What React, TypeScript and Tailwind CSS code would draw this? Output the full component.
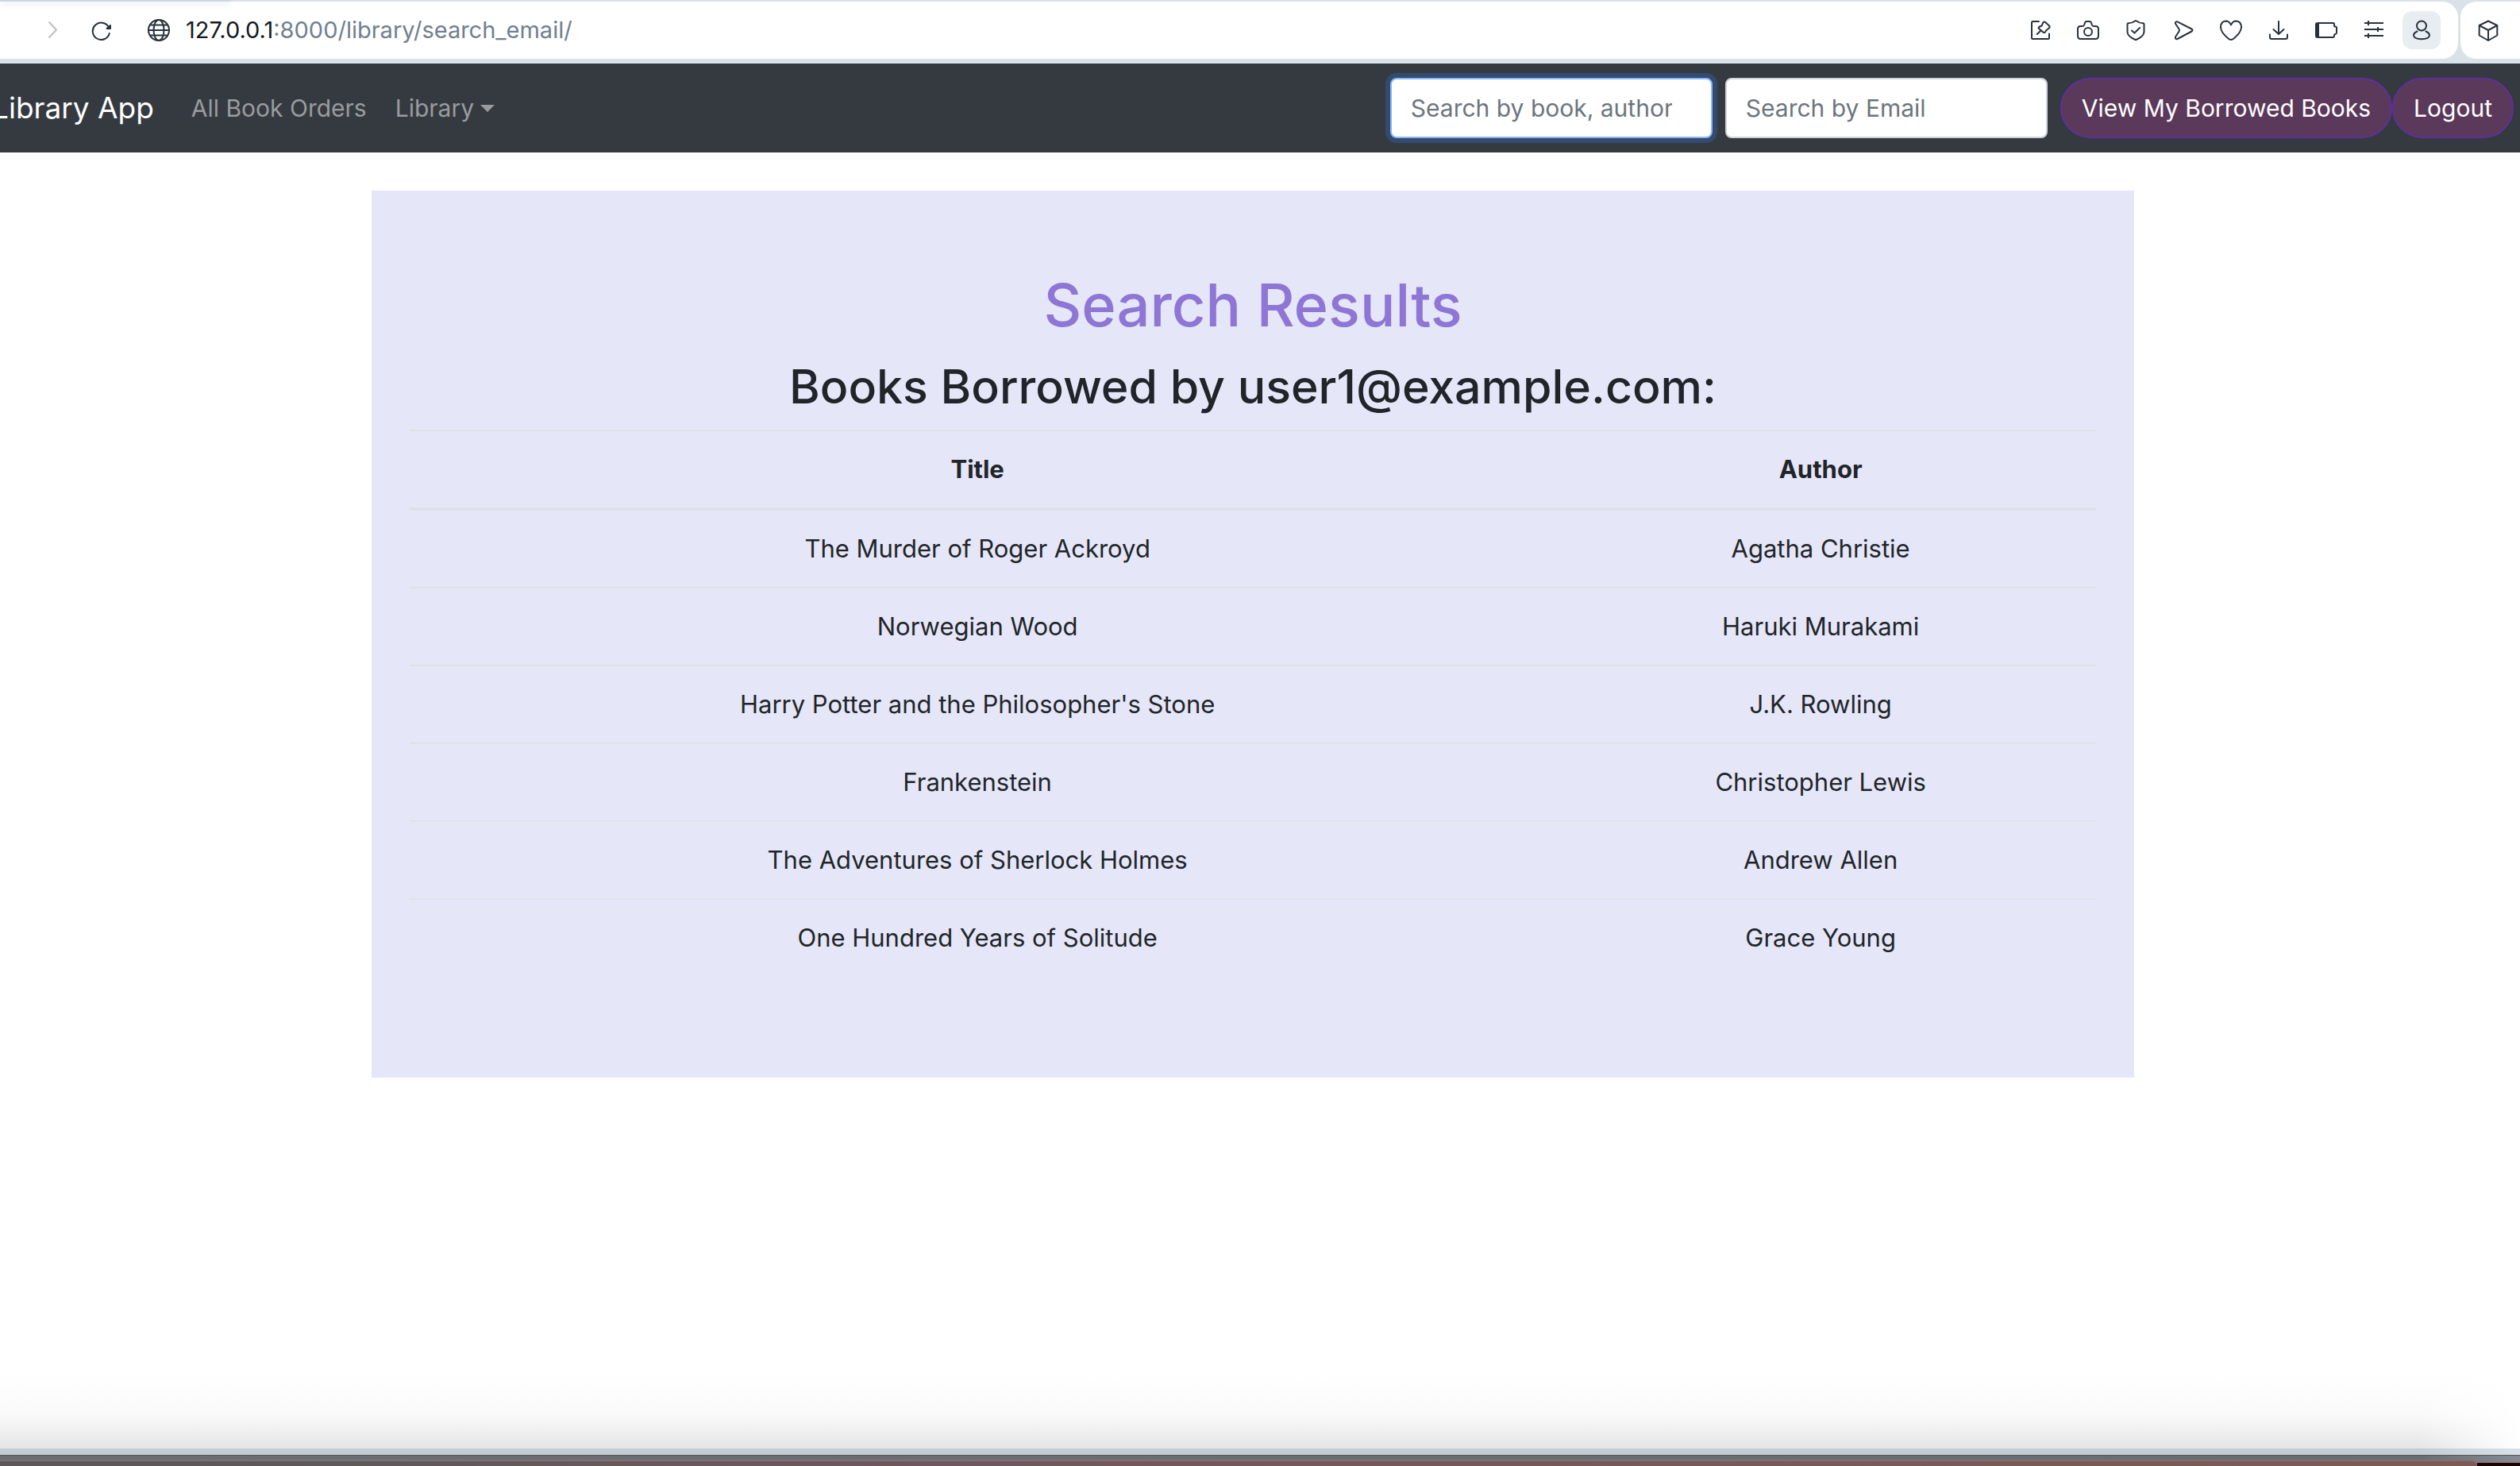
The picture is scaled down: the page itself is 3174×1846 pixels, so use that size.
import type { ReactNode } from "react";

function Icon({ children }: { children: ReactNode }) {
  return (
    <svg
      viewBox="0 0 28 28"
      className="h-7 w-7"
      fill="none"
      stroke="currentColor"
      strokeWidth="2"
      strokeLinecap="round"
      strokeLinejoin="round"
      aria-hidden="true"
    >
      {children}
    </svg>
  );
}

const tools: { label: string; icon: ReactNode }[] = [
  {
    label: "Pin page",
    icon: (
      <>
        <path d="M12 3H4.500Q3 3 3 4.500v19Q3 25 4.500 25H24q1 0 1-1v-5.500" />
        <path d="M17.500 4.300Q19 2.800 20.500 4.300L24.800 8.200Q26.300 9.700 25 11.200L21 14.500Q20 17.500 18 17L11.500 11.500Q11.500 9.500 15.500 8.500ZM14.500 14.500L9.800 19" />
      </>
    ),
  },
  {
    label: "Snapshot",
    icon: (
      <>
        <path d="M4.500 9H7Q8.600 9 9.200 7.200L10 4.500Q10.500 3 12 3h4q1.500 0 2 1.500l.8 2.700Q19.400 9 21 9h2.500Q27 9 27 12.500V21q0 4-3.500 4h-19Q1 25 1 21v-8.500Q1 9 4.500 9Z" />
        <circle cx="14" cy="16" r="5" />
      </>
    ),
  },
  {
    label: "Tracker blocker",
    icon: (
      <>
        <path d="M14 2Q18.500 5.200 23.200 5.200Q24.500 5.200 24.500 6.500V16Q24.500 22 14 26.200Q3.500 22 3.500 16V6.500Q3.500 5.200 4.800 5.200Q9.500 5.200 14 2Z" />
        <path d="M9 14.500l3.500 3L19 11" />
      </>
    ),
  },
  {
    label: "Send to My Flow",
    icon: (
      <path d="M6.500 3.400L24.500 12.500Q26.500 14 24.500 15.500L6.500 25Q3.500 26 4 22.500L8.500 15.500Q9.500 14 8.500 12.500L4 5.800Q3.500 2.600 6.500 3.400Z" />
    ),
  },
  {
    label: "Bookmark",
    icon: (
      <path d="M14 7.500Q12 2.500 7.500 2.500Q1 3 1 10.500Q1.500 17 10.500 24.500Q14 27.500 17.500 24.500Q26.500 17 27 10.500Q27 3 20.500 2.500Q16 2.500 14 7.500Z" />
    ),
  },
  {
    label: "Downloads",
    icon: (
      <>
        <path d="M14 3v15.500M7.500 13l6.500 6l6.500-6" />
        <path d="M3 19.500V23q0 2 2 2h18q2 0 2-2v-3.500" />
      </>
    ),
  },
  {
    label: "Battery saver",
    icon: (
      <>
        <path d="M4 5H22.500Q24 5 24 6.500V8q0 1.500 1.500 1.500Q27 9.500 27 11v6q0 1.500-1.500 2Q24 19 24 20.500Q24 23 22.500 23H4Z" />
        <path d="M5 4H3Q0 4 0 7v14q0 3 3 3h2Z" fill="currentColor" stroke="none" />
      </>
    ),
  },
  {
    label: "Easy setup",
    icon: <path strokeLinecap="butt" d="M2 5h24M2 13h24M2 21h24M7 2v6M19 10v6M7 18v6" />,
  },
];

function Toolbar() {
  return (
    <div className="flex h-20 gap-[3px] overflow-hidden bg-[#dae2e9] pt-[2px] pb-[6px] text-[#28323b]">
      <div className="flex flex-1 items-center rounded-r-[20px] bg-white pr-[22px] pl-[60px]">
        <button type="button" aria-label="Forward" className="text-[#bdbfc2]">
          <svg viewBox="0 0 12 28" className="h-7 w-3" fill="none" stroke="currentColor" strokeWidth="2" aria-hidden="true">
            <path d="M1.500 3.500L11 13.500L1.500 23.500" />
          </svg>
        </button>
        <button type="button" aria-label="Reload" className="ml-[41px]">
          <Icon>
            <path d="M24 10.500A10.700 10.700 0 1 0 24.800 18" />
            <path d="M26 8v4h-4.500Z" fill="currentColor" />
          </Icon>
        </button>
        <button type="button" aria-label="Site information" className="ml-[45px]">
          <Icon>
            <circle cx="14" cy="14" r="13" />
            <ellipse cx="14" cy="14" rx="6.500" ry="13" />
            <path d="M1 14h26M3 7.500h22M3 20.500h22" />
          </Icon>
        </button>
        <div className="ml-5 text-[29px] leading-9 text-[#6f8090]">
          <span className="text-[#15191e]">127.0.0.1</span>:8000/library/search_email/
        </div>
        <div className="ml-auto flex items-center gap-8">
          {tools.map((tool) => (
            <button key={tool.label} type="button" aria-label={tool.label}>
              <Icon>{tool.icon}</Icon>
            </button>
          ))}
          <button
            type="button"
            aria-label="Profile"
            className="-ml-[10px] flex h-12 w-12 items-center justify-center rounded-xl bg-[#e8edf1]"
          >
            <Icon>
              <circle cx="14" cy="8.500" r="6" />
              <path d="M8.500 15.500Q4 17.500 4 20.500Q4.500 25.200 14 25.200Q23.500 25.200 24 20.500Q24 17.500 19.500 15.500" />
            </Icon>
          </button>
        </div>
      </div>
      <div className="flex w-[75px] items-center rounded-l-[20px] bg-white pl-[21px]">
        <button type="button" aria-label="Extensions">
          <Icon>
            <path d="M14 2.500L25.300 8v12.500L14 27L2.700 20.500V8ZM2.700 8L14 14L25.300 8M14 14v13" />
          </Icon>
        </button>
      </div>
    </div>
  );
}

function Navbar() {
  return (
    <nav className="flex h-28 items-center overflow-hidden bg-[#353a41] pr-2 text-[30px] leading-[48px]">
      <a href="#home" className="-ml-[10px] text-[37px] whitespace-nowrap text-white">
        Library App
      </a>
      <a href="#orders" className="ml-[47px] whitespace-nowrap text-[#999c9f]">
        All Book Orders
      </a>
      <button type="button" className="ml-9 flex items-center gap-2 text-[#999c9f]">
        Library
        <span className="border-x-[9px] border-t-[9px] border-x-transparent border-t-current" />
      </button>
      <form className="ml-auto flex items-center gap-4">
        <input
          type="search"
          aria-label="Search by book or author"
          placeholder="Search by book, author"
          className="h-[76px] w-[406px] rounded-lg border-2 border-[#86b7fa] bg-white px-6 ring-[6px] ring-[#344a6e] outline-none placeholder:text-[#6d757d]"
        />
        <input
          type="search"
          aria-label="Search by Email"
          placeholder="Search by Email"
          className="h-[76px] w-[406px] rounded-lg border-2 border-[#ced4da] bg-white px-6 outline-none placeholder:text-[#6d757d]"
        />
        <div className="flex">
          <button type="button" className="h-[76px] rounded-full border-2 border-[#5f309b] bg-[#5b395b] px-[25px] whitespace-nowrap text-white">
            View My Borrowed Books
          </button>
          <button type="button" className="h-[76px] rounded-full border-2 border-[#5f309b] bg-[#5b395b] px-[25px] text-white">
            Logout
          </button>
        </div>
      </form>
    </nav>
  );
}

const books = [
  ["The Murder of Roger Ackroyd", "Agatha Christie"],
  ["Norwegian Wood", "Haruki Murakami"],
  ["Harry Potter and the Philosopher's Stone", "J.K. Rowling"],
  ["Frankenstein", "Christopher Lewis"],
  ["The Adventures of Sherlock Holmes", "Andrew Allen"],
  ["One Hundred Years of Solitude", "Grace Young"],
];

function Results() {
  return (
    <main className="pt-12 pr-[18px]">
      <section className="mx-auto max-w-[2220px] bg-[#e5e6f8] px-12 pt-24 pb-32 text-center text-[#212529]">
        <h1 className="mb-4 text-[74px] leading-[96px] font-medium text-[#8e76d6]">Search Results</h1>
        <h2 className="mb-4 text-[59px] leading-[77px] font-medium">Books Borrowed by user1@example.com:</h2>
        <table className="w-full border-collapse text-[31px] leading-[48px]">
          <thead>
            <tr className="border-t-2 border-b-4 border-[#dee2e6]">
              <th className="p-6 font-bold">Title</th>
              <th className="p-6 font-bold">Author</th>
            </tr>
          </thead>
          <tbody>
            {books.map(([title, author]) => (
              <tr key={title} className="border-t-2 border-[#dee2e6] first:border-t-4">
                <td className="p-6">{title}</td>
                <td className="p-6">{author}</td>
              </tr>
            ))}
          </tbody>
        </table>
      </section>
    </main>
  );
}

function WindowEdge() {
  return (
    <footer className="mt-auto">
      <div className="flex h-24 bg-linear-to-b from-white via-[#fafafa] via-55% to-[#e5e5e5]">
        <div className="ml-auto w-32 bg-linear-to-r from-white/0 to-white" />
      </div>
      <div className="h-2 bg-linear-to-r from-[#c3cbd3] from-96% to-[#d9e1e8]" />
      <div className="h-[14px] overflow-hidden border-t border-[#53575a] bg-linear-to-r from-[#696e73] from-96% to-[#868c92]">
        <div className="mt-[5px] flex h-2">
          <div className="flex-1 rounded-tr-[20px] border-t-2 border-[#84706f] bg-linear-to-r from-[#5b5a5a] from-12% via-[#70575f] via-40% to-[#7d5b54]" />
          <div className="mt-1 w-[54px] bg-[#1f0302]" />
        </div>
      </div>
    </footer>
  );
}

export default function App() {
  return (
    <div className="flex min-h-screen flex-col bg-white font-['Inter',sans-serif]">
      <Toolbar />
      <Navbar />
      <Results />
      <WindowEdge />
      <div className="absolute top-0 left-0 h-[2px] w-[290px] bg-[#cbd6df] shadow-[0_2px_8px_rgba(120,140,160,0.4)]" />
    </div>
  );
}
